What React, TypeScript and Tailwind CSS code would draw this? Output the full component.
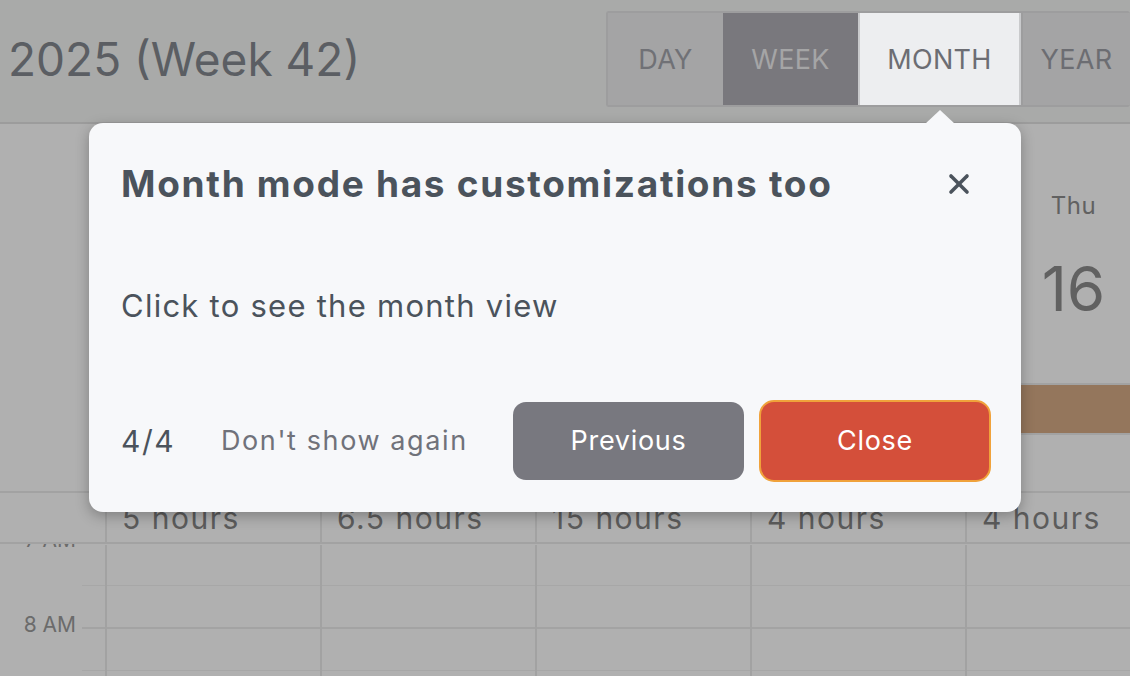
import {X} from "lucide-react";

const days = [
    {name: 'Sun', num: '12'},
    {name: 'Mon', num: '13'},
    {name: 'Tue', num: '14'},
    {name: 'Wed', num: '15'},
    {name: 'Thu', num: '16'},
]

const totals = ['5 hours', '6.5 hours', '15 hours', '4 hours', '4 hours']

const hours = ['7 AM', '8 AM']

const modes = ['DAY', 'WEEK', 'MONTH', 'YEAR']

const ModeSwitch = () => (
    <div className="flex h-[96px] rounded-[3px] border-2 border-r-0 border-[#9d9d9e] overflow-hidden shrink-0">
        {modes.map(m => {
            const cls = m === 'WEEK'
                ? 'w-[135px] bg-[#79787d] text-[#a5a5a6]'
                : m === 'MONTH'
                    ? 'w-[163px] bg-[#edeef0] text-[#6c6d73] border-x-2 border-[#c9cacc]'
                    : m === 'DAY'
                        ? 'w-[115px] bg-[#a4a4a5] text-[#707176]'
                        : 'w-[109px] bg-[#a4a4a5] text-[#6c6d72] border-l-2 border-[#9d9d9e]'
            return (
                <div key={m} className={'flex items-center justify-center pt-[3px] text-[27px] tracking-[0.3px] ' + cls}>
                    {m}
                </div>
            )
        })}
    </div>
)

const Tour = () => (
    <div className="absolute left-[89px] top-[123px] w-[932px] h-[389px] rounded-[14px] bg-[#f7f8fa] shadow-[0_4px_14px_rgba(0,0,0,0.28)] px-8 flex flex-col">
        {/* arrow pointing at month button */}
        <div className="absolute left-[836px] -top-[13px] w-0 h-0 border-x-[15px] border-x-transparent border-b-[14px] border-b-[#f7f8fa]"/>
        <div className="flex items-center justify-between h-[122px] pb-[1px]">
            <h2 className="text-[37px] font-bold text-[#4b535c] tracking-[1.7px]">Month mode has customizations too</h2>
            <button className="mr-[14px] text-[#4b535c]">
                <X size={32} strokeWidth={2.7}/>
            </button>
        </div>
        <div className="flex items-center h-[122px] text-[31px] text-[#4b535c] tracking-[1.25px]">
            Click to see the month view
        </div>
        <div className="flex items-center h-[100px] mt-[24px]">
            <span className="text-[30px] text-[#4b535c] tracking-[1.5px] w-[100px]">4/4</span>
            <span className="text-[27px] text-[#70727a] tracking-[1.6px]">Don't show again</span>
            <div className="ml-auto flex items-center gap-[15px] mr-[-2px]">
                <button className="w-[231px] h-[78px] rounded-[13px] bg-[#78787f] text-white text-[27px] tracking-[0.7px]">Previous</button>
                <button className="w-[232px] h-[82px] rounded-[15px] bg-[#d44f3a] border-2 border-[#f0a23b] text-white text-[27px] tracking-[0.7px]">Close</button>
            </div>
        </div>
    </div>
)

const App = () => {
    return (
        <div className="relative w-[1130px] h-[676px] overflow-hidden bg-[#b0b0b0] font-['Inter',sans-serif]">
            <div className="flex justify-between h-[124px] bg-[#a9aaa9] border-b-2 border-[#9c9c9c] pt-[11px]">
                <h1 className="pl-[8px] pt-[12px] text-[46px] text-[#5b5e63] leading-none h-fit mt-[13px]">2025 (Week 42)</h1>
                <ModeSwitch/>
            </div>

            <div className="flex">
                <div className="w-[105px] shrink-0 h-[369px] border-b-2 border-[#a2a2a2]"/>
                {days.map((d, i) => (
                    <div key={d.name} className="w-[215px] shrink-0 border-l-2 border-[#a2a2a2] flex flex-col">
                        <div className="h-[259px] flex flex-col items-center text-[#616161]">
                            <span className="mt-[64px] text-[24px] tracking-[0.5px]">{d.name}</span>
                            <span className="mt-[34px] text-[62px] leading-none">{d.num}</span>
                        </div>
                        <div className="h-[50px] border-t-2 border-[#a2a2a2] flex items-center">
                            {i === 4 && <div className="w-full h-[48px] bg-[#94765c]"/>}
                        </div>
                        <div className="h-[60px] border-t-2 border-b-2 border-[#a2a2a2]"/>
                    </div>
                ))}
            </div>

            <div className="flex h-[51px] border-b-2 border-[#a2a2a2]">
                <div className="w-[105px] shrink-0"/>
                {totals.map((t, i) => (
                    <div key={i} className="w-[215px] shrink-0 border-l-2 border-[#a2a2a2] pl-[15px] text-[30px] text-[#5c5c5c] tracking-[1.5px] leading-[50px]">
                        {t}
                    </div>
                ))}
            </div>

            <div className="flex h-[140px] overflow-hidden">
                <div className="w-[82px] shrink-0 flex flex-col -mt-[1px]">
                    {hours.map(h => (
                        <div key={h} className="h-[85px] shrink-0 text-right pr-[6px] text-[21px] text-[#6b6b6b] leading-[22px]">
                            <span className="relative -top-[14px]">{h}</span>
                        </div>
                    ))}
                </div>
                <div className="flex-1 flex flex-col">
                    <div className="h-[42px] border-b border-[#a7a7a7]"/>
                    <div className="h-[43px] border-b-2 border-[#a3a3a3]"/>
                    <div className="h-[42px] border-b border-[#a7a7a7]"/>
                </div>
            </div>

            <div className="absolute left-[105px] top-[545px] bottom-0 flex pointer-events-none">
                {totals.map((_, i) => (
                    <div key={i} className="w-[215px] shrink-0 border-l-2 border-[#a2a2a2]"/>
                ))}
            </div>

            <Tour/>
        </div>
    );
};

export default App;
